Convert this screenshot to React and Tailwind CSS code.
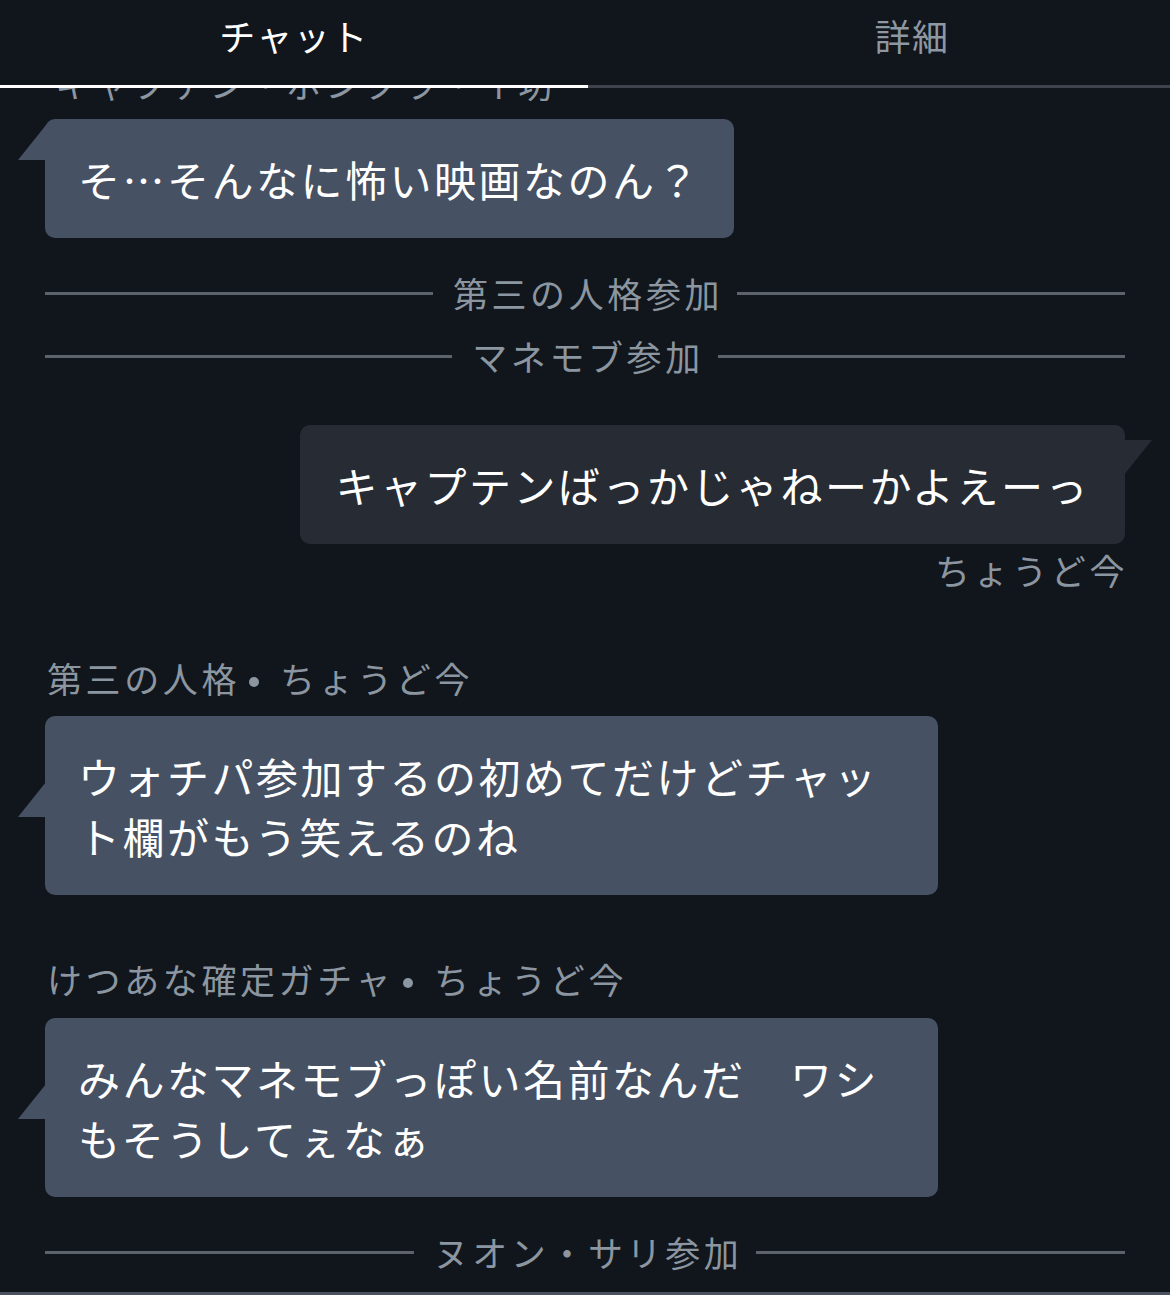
const font = { fontFamily: '"Noto Sans CJK JP", "Noto Sans", sans-serif' }

const LeftTail = () => (
  <svg className="absolute left-[-27px] bottom-[78px]" width="28" height="35" viewBox="0 0 28 35">
    <polygon points="28,0 0,35 28,35" fill="#465163" />
  </svg>
)

const RightTail = () => (
  <svg className="absolute right-[-27px] top-[15px]" width="28" height="35" viewBox="0 0 28 35">
    <polygon points="0,0 28,0 0,35" fill="#262b34" />
  </svg>
)

const Separator = ({ label, className }) => (
  <div className={`mx-[45px] flex h-[40px] items-center ${className}`}>
    <div className="h-[3px] flex-1 bg-[#5c636b]" />
    <span className="pl-[20px] pr-[14px] text-[35px] leading-[40px] tracking-[3.6px] text-[#8b96a0]">{label}</span>
    <div className="h-[3px] flex-1 bg-[#5c636b]" />
  </div>
)

const NameLine = ({ name, className }) => (
  <div className={`ml-[47px] flex h-[40px] items-center text-[35px] leading-[40px] tracking-[3.6px] text-[#8b96a0] ${className}`}>
    <span>{name}</span>
    <span className="mt-[8px] ml-[9px] mr-[21px] h-[10px] w-[10px] rounded-full bg-[#8b96a0]" />
    <span>ちょうど今</span>
  </div>
)

export default function App() {
  return (
    <div className="flex h-[1295px] w-[1170px] flex-col overflow-hidden bg-[#11151c]" style={font}>
      <div className="flex h-[85px] pb-[15px]">
        <div className="flex w-[588px] items-center justify-center text-[36px] tracking-[1.5px] text-white">チャット</div>
        <div className="flex flex-1 items-center justify-center pl-[66px] text-[36px] tracking-[1.5px] text-[#8e98a2]">詳細</div>
      </div>
      <div className="flex h-[3px]">
        <div className="w-[588px] bg-white" />
        <div className="flex-1 bg-[#3f444c]" />
      </div>

      <div className="relative h-[1204px] overflow-hidden">
        <div className="mt-[-25px] ml-[55px] h-[40px] text-[35px] leading-[40px] tracking-[3.6px] text-[#8b96a0]">キャプテン・ボンクラ・イ坊</div>

        <div className="relative mt-[16px] ml-[45px] inline-block rounded-[10px] bg-[#465163] px-[33px] py-[29.5px] text-[42px] leading-[60px] tracking-[2.5px] text-white">
          <LeftTail />
          そ…そんなに怖い映画なのん？
        </div>

        <Separator label="第三の人格参加" className="mt-[35px]" />
        <Separator label="マネモブ参加" className="mt-[23px]" />

        <div className="mt-[49px] mr-[45px] flex justify-end">
          <div className="relative rounded-[10px] bg-[#262b34] py-[29.5px] pl-[36px] pr-[35px] text-[42px] leading-[60px] tracking-[2.5px] text-white">
            <RightTail />
            キャプテンばっかじゃねーかよえーっ
          </div>
        </div>
        <div className="mt-[6px] mr-[42px] h-[40px] text-right text-[35px] leading-[40px] tracking-[3.6px] text-[#8b96a0]">ちょうど今</div>

        <NameLine name="第三の人格" className="mt-[68px]" />
        <div className="relative mt-[18px] ml-[45px] w-[893px] rounded-[10px] bg-[#465163] px-[33px] py-[29.5px] text-[42px] leading-[60px] tracking-[2.5px] text-white">
          <LeftTail />
          ウォチパ参加するの初めてだけどチャッ<br />ト欄がもう笑えるのね
        </div>

        <NameLine name="けつあな確定ガチャ" className="mt-[64px]" />
        <div className="relative mt-[19px] ml-[45px] w-[893px] rounded-[10px] bg-[#465163] px-[33px] py-[29.5px] text-[42px] leading-[60px] tracking-[2.5px] text-white">
          <LeftTail />
          みんなマネモブっぽい名前なんだ　ワシ<br />もそうしてぇなぁ
        </div>

        <Separator label="ヌオン・サリ参加" className="mt-[35px]" />
      </div>
      <div className="flex-1 bg-[#4a5260]" />
    </div>
  )
}
